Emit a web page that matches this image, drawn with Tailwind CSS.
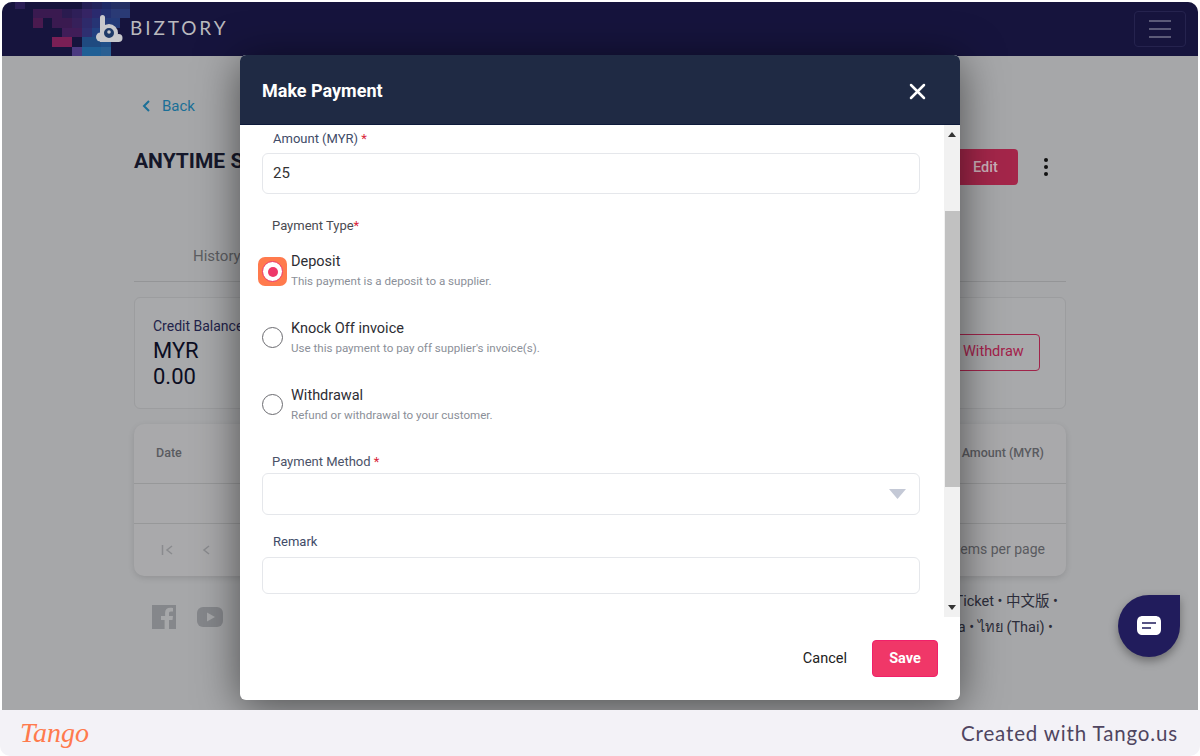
<!DOCTYPE html>
<html lang="en">
<head>
    <meta charset="UTF-8">
    <meta name="viewport" content="width=device-width, initial-scale=1.0">
    <title>Make Payment</title>
    <script src="https://cdn.jsdelivr.net/npm/@tailwindcss/browser@4"></script>
</head>
<body class="bg-white font-['Roboto','Noto_Sans_CJK_SC','DejaVu_Sans',sans-serif]">
<div class="relative w-[1200px] h-[756px] overflow-hidden bg-white pt-[2px]">
    <div class="flex flex-col h-[708px] mx-[2px] rounded-t-[10px] overflow-hidden bg-[#a6a7a9]">
        <!-- top bar -->
        <header class="relative shrink-0 h-[54px] bg-[#16143d] flex items-center justify-between pr-[12px]">
            <svg class="absolute left-0 top-0" width="140" height="54" viewBox="0 0 140 54">
                <rect x="13" y="0" width="10" height="7" fill="#2a1e55"/>
                <rect x="80" y="0" width="10" height="7" fill="#241f55"/>
                <rect x="90" y="0" width="10" height="7" fill="#22245c"/>
                <rect x="100" y="0" width="9" height="7" fill="#1e2a66"/>
                <rect x="109" y="0" width="19" height="7" fill="#243064"/>
                <rect x="31" y="7" width="29" height="9" fill="#3a1a50"/>
                <rect x="60" y="7" width="10" height="9" fill="#2a1b4f"/>
                <rect x="70" y="7" width="10" height="9" fill="#2e1f58"/>
                <rect x="80" y="7" width="10" height="9" fill="#352464"/>
                <rect x="90" y="7" width="9" height="9" fill="#2a2a6e"/>
                <rect x="99" y="7" width="10" height="9" fill="#233070"/>
                <rect x="109" y="7" width="19" height="9" fill="#2a3a75"/>
                <rect x="31" y="16" width="10" height="10" fill="#4a1a4f"/>
                <rect x="50" y="16" width="20" height="10" fill="#3a1a50"/>
                <rect x="70" y="16" width="10" height="10" fill="#36205a"/>
                <rect x="80" y="16" width="10" height="10" fill="#2e2a6a"/>
                <rect x="90" y="16" width="9" height="10" fill="#263474"/>
                <rect x="99" y="16" width="19" height="10" fill="#243a78"/>
                <rect x="60" y="26" width="20" height="9" fill="#401d58"/>
                <rect x="80" y="26" width="10" height="9" fill="#2e2f70"/>
                <rect x="90" y="26" width="18" height="9" fill="#224080"/>
                <rect x="50" y="35" width="20" height="10" fill="#7a1f55"/>
                <rect x="80" y="35" width="19" height="10" fill="#1f4a80"/>
                <rect x="99" y="35" width="10" height="10" fill="#204f88"/>
                <rect x="70" y="45" width="10" height="9" fill="#4a3a80"/>
                <rect x="80" y="45" width="19" height="9" fill="#1f5f95"/>
                <rect x="99" y="45" width="10" height="9" fill="#2a5f92"/>
            </svg>
            <div class="relative flex items-center ml-[94px] gap-[7px]">
                <svg width="27" height="28" viewBox="0 0 27 28">
                    <circle cx="4.500" cy="22" r="4.500" fill="#c8c8cc"/>
                    <circle cx="22.500" cy="23" r="4" fill="#c8c8cc"/>
                    <rect x="4" y="24" width="19" height="3" fill="#c8c8cc"/>
                    <path d="M6.500 2.500V17" fill="none" stroke="#c8c8cc" stroke-width="5" stroke-linecap="round"/>
                    <circle cx="13" cy="18" r="7" fill="#1f3a68" stroke="#c8c8cc" stroke-width="4"/>
                    <circle cx="13" cy="17" r="1.800" fill="#c8c8cc"/>
                </svg>
                <span class="text-[19px] tracking-[2.900px] text-[#b9b9be] font-['Lato',sans-serif] -mt-[1px]">BIZTORY</span>
            </div>
            <div class="relative w-[52px] h-[36px] rounded-[4px] border border-[#25234e] flex flex-col items-center justify-center gap-[6px]">
                <span class="w-[22px] h-[2px] bg-[#5c5b78]"></span>
                <span class="w-[22px] h-[2px] bg-[#5c5b78]"></span>
                <span class="w-[22px] h-[2px] bg-[#5c5b78]"></span>
            </div>
        </header>

        <!-- dimmed page behind the dialog -->
        <main class="flex-1 px-[132px] pt-[40px]">
            <div class="flex items-center gap-[12px] pl-[8px] text-[#1a6f97] text-[15px] h-[20px]">
                <svg width="9" height="12" viewBox="0 0 9 12" fill="none" stroke="currentColor" stroke-width="2"><path d="M7 1 2 6l5 5"/></svg>
                <span class="-ml-[1px]">Back</span>
            </div>
            <div class="flex items-center justify-between h-[36px] mt-[33px] pr-[18px]">
                <h1 class="text-[21px] font-bold text-[#15172a] -mt-[10px]">ANYTIME S</h1>
                <div class="flex items-center gap-[26px]">
                    <span class="w-[70px] h-[36px] pl-[25px] pt-[1px] flex items-center rounded-[4px] bg-[#a4264a] text-[#c9b0b8] text-[14.500px] font-medium">Edit</span>
                    <span class="flex flex-col gap-[3px]">
                        <i class="block w-[4px] h-[4px] rounded-full bg-[#111]"></i>
                        <i class="block w-[4px] h-[4px] rounded-full bg-[#111]"></i>
                        <i class="block w-[4px] h-[4px] rounded-full bg-[#111]"></i>
                    </span>
                </div>
            </div>
            <div class="h-[63px] mt-[34px] border-b border-[#949597] pl-[59px] pt-[26px] text-[15px] text-[#5d5e62]">History</div>
            <section class="flex justify-between items-center h-[112px] mt-[15px] rounded-[6px] border border-[#9c9d9f] bg-[#a8a9ab] pl-[18px] pr-[25px]">
                <div>
                    <div class="text-[14px] leading-[18px] text-[#23234a] mb-[3px]">Credit Balance</div>
                    <div class="text-[22px] leading-[26px] text-[#0b0d22]">MYR</div>
                    <div class="text-[22px] leading-[26px] text-[#0b0d22]">0.00</div>
                </div>
                <span class="w-[90px] h-[37px] -mt-[2px] pl-[12px] flex items-center rounded-[4px] border border-[#a0244a] text-[#a3214a] text-[14.500px]">Withdraw</span>
            </section>
            <section class="h-[152px] mt-[15px] rounded-[10px] bg-[#a9a9ab] shadow-[0_2px_6px_rgba(0,0,0,0.12)] text-[#5a5b60]">
                <div class="h-[60px] border-b border-[#979899] flex items-center justify-between px-[22px] text-[12.500px] font-medium">
                    <span>Date</span>
                    <span>Amount (MYR)</span>
                </div>
                <div class="h-[40px] border-b border-[#979899]"></div>
                <div class="h-[51px] flex items-center justify-between pl-[27px] pr-[21px]">
                    <span class="flex items-center gap-[28px]">
                        <svg width="13" height="10" viewBox="0 0 13 10" fill="none" stroke="#8a8b8e" stroke-width="1.500"><path d="M1.500 0v10M11 1 6 5l5 4"/></svg>
                        <svg width="8" height="10" viewBox="0 0 8 10" fill="none" stroke="#8a8b8e" stroke-width="1.500"><path d="M7 1 2 5l5 4"/></svg>
                    </span>
                    <span class="text-[14px]">Items per page</span>
                </div>
            </section>
            <footer class="flex justify-between mt-[13px] pr-[8px]">
                <div class="flex items-center gap-[21px] h-[56px] pl-[18px]">
                    <svg width="24" height="24" viewBox="0 0 24 24"><path d="M0 0h24v24h-7v-9h3.500l.5-4h-4V8.500c0-1.200.4-2 2-2h2V3c-.5 0-1.600-.2-2.900-.2-3 0-5 1.800-5 5V11H9v4h3.600v9H0z" fill="#85878b"/></svg>
                    <svg width="26" height="20" viewBox="0 0 26 20"><rect width="26" height="20" rx="6" fill="#85878b"/><path d="M10 5.500v9l8-4.500z" fill="#a6a7a9"/></svg>
                </div>
                <div class="text-right text-[14.500px] leading-[26px] text-[#2c2d3a]">
                    <div>Ticket • 中文版 •</div>
                    <div class="pr-[5px]">Bahasa • ไทย (Thai) •</div>
                </div>
            </footer>
        </main>
    </div>

    <!-- chat launcher -->
    <div class="absolute left-[1118px] top-[595px] w-[62px] h-[62px] rounded-full rounded-tr-[8px] bg-[#211c5c] shadow-[0_4px_10px_rgba(0,0,0,0.35)] flex items-center justify-center">
        <svg width="24" height="20" viewBox="0 0 24 20">
            <path d="M6 0h12c4 0 6 2 6 6v7c0 4-2 6-6 6H6c-4 0-6-2-6-6V6c0-4 2-6 6-6z" fill="#fff"/>
            <path d="M5 7h14M5 12h9" stroke="#211c5c" stroke-width="1.500"/>
        </svg>
    </div>

    <!-- dialog -->
    <div class="absolute left-[240px] top-[55px] w-[720px] h-[645px] flex flex-col rounded-[6px] bg-white shadow-[0_6px_44px_rgba(0,0,0,0.55)]">
        <div class="shrink-0 h-[70px] rounded-t-[6px] border-b border-[#0e1a3a] bg-[#1f2a44] flex items-center justify-between pl-[22px] pr-[34px] pt-[2px]">
            <h2 class="text-[18px] font-bold text-white -mt-[1px]">Make Payment</h2>
            <svg class="mt-[1px]" width="17" height="17" viewBox="0 0 17 17" stroke="#fff" stroke-width="2.500" stroke-linecap="round"><path d="M2 2l13 13M15 2 2 15"/></svg>
        </div>
        <div class="flex h-[492px] shrink-0">
            <form class="flex-1 pl-[22px] pr-[24px] overflow-hidden text-[13px]">
                <div class="pl-[11px] pt-[6px] leading-[16px] text-[#414b68]">Amount (MYR) <span class="text-[#d9263a]">*</span></div>
                <div class="h-[41px] mt-[6px] pl-[10px] flex items-center rounded-[6px] border border-[#e5e7eb] text-[15px] text-[#333]">25</div>
                <div class="pl-[10px] mt-[24px] leading-[16px] text-[#4a4b52]">Payment Type<span class="text-[#d9263a]">*</span></div>

                <div class="flex mt-[23px] h-[40px]">
                    <span class="w-[29px] h-[29px] -ml-[4px] flex items-center justify-center rounded-[7px] bg-[#ff7a4d] shrink-0">
                        <span class="w-[21px] h-[21px] flex items-center justify-center rounded-full bg-white border border-[#ee3769]">
                            <span class="w-[10px] h-[10px] rounded-full bg-[#ee3769]"></span>
                        </span>
                    </span>
                    <div class="ml-[4px] -mt-[5px]">
                        <div class="leading-[20px] text-[14.500px] text-[#2d2d33]">Deposit</div>
                        <div class="leading-[18px] text-[11.600px] text-[#8b8f98]">This payment is a deposit to a supplier.</div>
                    </div>
                </div>
                <div class="flex mt-[27px] h-[40px]">
                    <span class="w-[21px] h-[21px] mt-[3px] rounded-full border-[1.500px] border-[#6b6b70] shrink-0"></span>
                    <div class="ml-[8px] -mt-[5px]">
                        <div class="leading-[20px] text-[14.500px] text-[#2d2d33]">Knock Off invoice</div>
                        <div class="leading-[18px] text-[11.600px] text-[#8b8f98]">Use this payment to pay off supplier's invoice(s).</div>
                    </div>
                </div>
                <div class="flex mt-[27px] h-[40px]">
                    <span class="w-[21px] h-[21px] mt-[3px] rounded-full border-[1.500px] border-[#6b6b70] shrink-0"></span>
                    <div class="ml-[8px] -mt-[5px]">
                        <div class="leading-[20px] text-[14.500px] text-[#2d2d33]">Withdrawal</div>
                        <div class="leading-[18px] text-[11.600px] text-[#8b8f98]">Refund or withdrawal to your customer.</div>
                    </div>
                </div>

                <div class="pl-[10px] mt-[23px] leading-[16px] text-[#4b5268]">Payment Method <span class="text-[#d9263a]">*</span></div>
                <div class="h-[42px] mt-[3px] pr-[13px] flex items-center justify-end rounded-[6px] border border-[#e5e7eb]">
                    <svg width="17" height="10" viewBox="0 0 17 10"><path d="M0 0h17l-8.500 10z" fill="#c4c9d6"/></svg>
                </div>
                <div class="pl-[11px] mt-[19px] leading-[16px] text-[#414b68]">Remark</div>
                <div class="h-[37px] mt-[7px] rounded-[6px] border border-[#e5e7eb]"></div>
            </form>
            <div class="w-[16px] shrink-0 flex flex-col items-center bg-[#f1f1f1]">
                <svg class="mt-[7px]" width="8" height="5" viewBox="0 0 8 5"><path d="M0 5h8L4 0z" fill="#333"/></svg>
                <div class="w-[15px] h-[276px] mt-[74px] bg-[#c1c1c1]"></div>
                <svg class="mt-[118px]" width="8" height="5" viewBox="0 0 8 5"><path d="M0 0h8L4 5z" fill="#333"/></svg>
            </div>
        </div>
        <div class="flex-1 flex items-start justify-end gap-[25px] pt-[23px] pr-[22px]">
            <span class="h-[37px] pt-[1px] flex items-center text-[14.500px] text-[#222]">Cancel</span>
            <span class="w-[66px] h-[37px] flex items-center justify-center rounded-[4px] border border-[#f0206a] bg-[#f03768] text-[14.500px] font-bold text-white">Save</span>
        </div>
    </div>

    <!-- capture footer -->
    <div class="absolute left-0 top-[710px] w-[1200px] h-[46px] rounded-b-[10px] bg-[#f3f2f7] flex items-center justify-between pl-[20px] pr-[22px]">
        <span class="text-[28px] italic font-['Liberation_Serif',serif] text-[#ff7a4d]">Tango</span>
        <span class="text-[20.500px] tracking-[0.850px] font-['Lato',sans-serif] text-[#4f4560]">Created with Tango.us</span>
    </div>
</div>
</body>
</html>
